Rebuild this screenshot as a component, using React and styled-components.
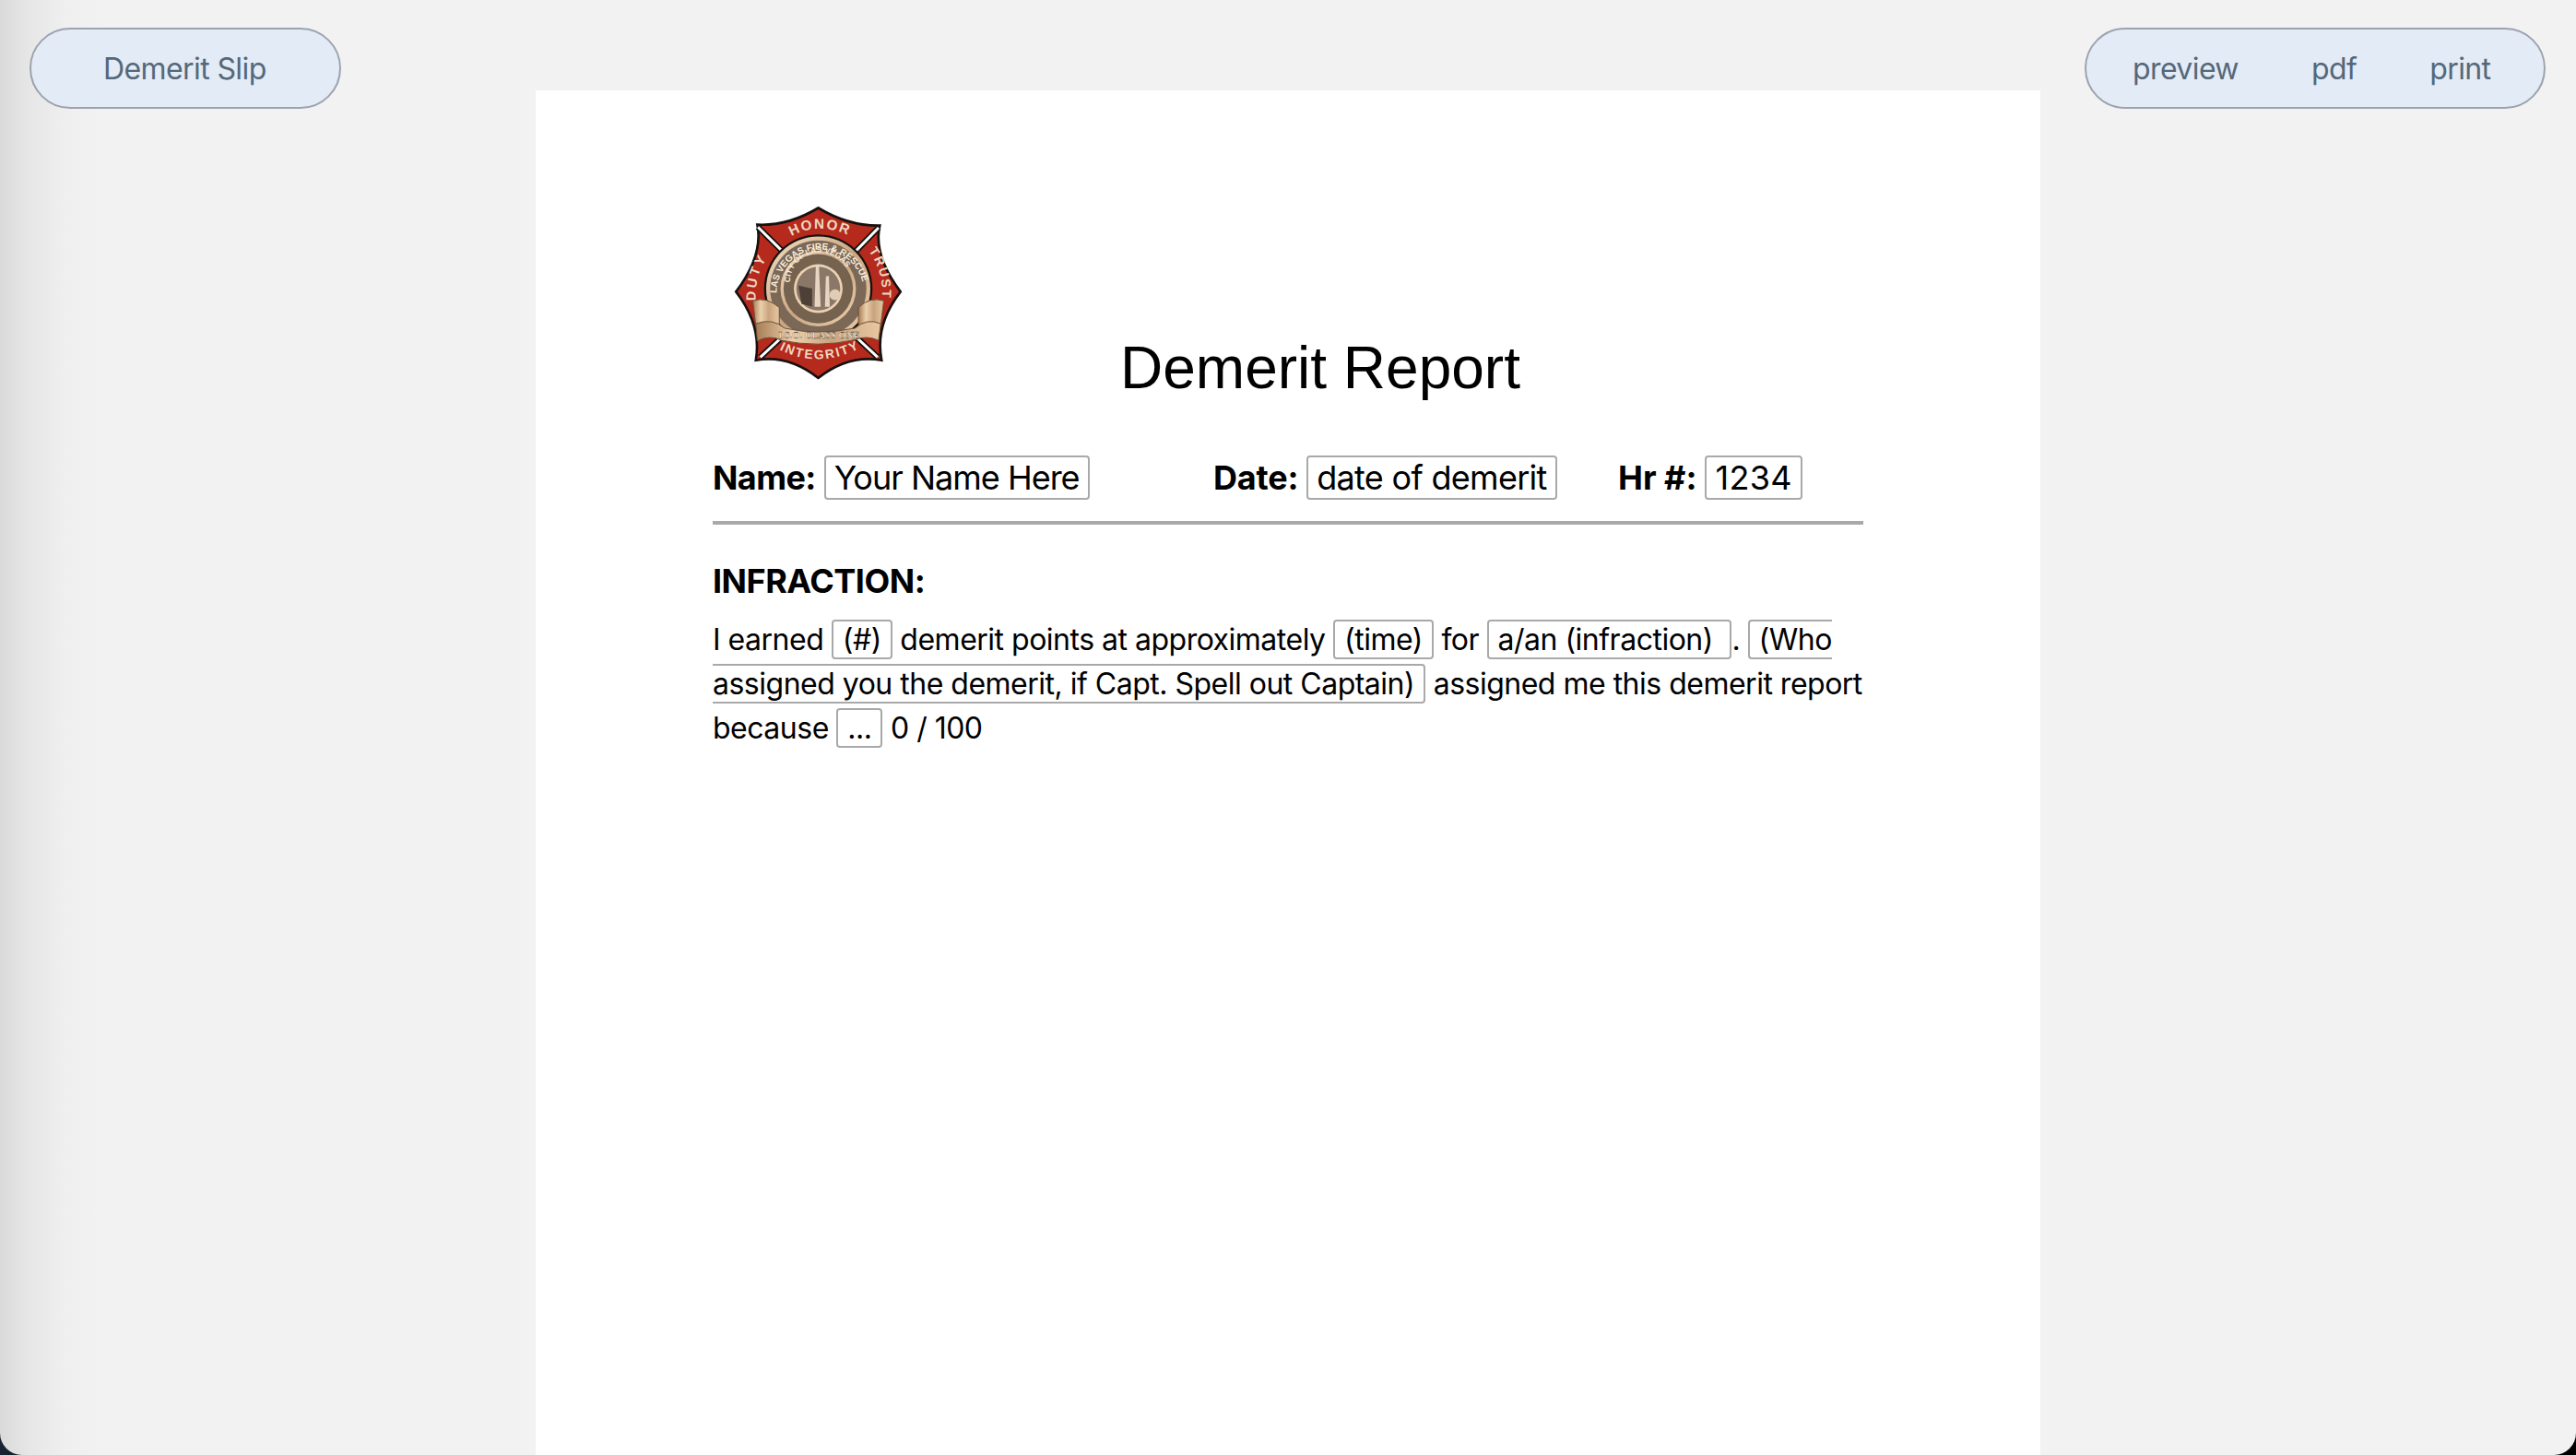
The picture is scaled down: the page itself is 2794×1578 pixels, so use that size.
import styled, { createGlobalStyle } from "styled-components";

const GlobalStyle = createGlobalStyle`
    html, body {
        margin: 0;
        padding: 0;
        background: linear-gradient(to right, #1a2433 0, #000 120px);
        overflow: hidden;
    }
`;

const Badge = () => (
    <S.Logo viewBox="70 35 560 580">
        <defs>
            <linearGradient id="metal" x1="0" y1="0" x2="1" y2="1">
                <stop offset="0" stopColor="#f5dfc4" />
                <stop offset="0.5" stopColor="#c9a682" />
                <stop offset="1" stopColor="#ecd0ae" />
            </linearGradient>
            <linearGradient id="ribbon" x1="0" y1="0" x2="1" y2="0">
                <stop offset="0" stopColor="#a67c55" />
                <stop offset="0.3" stopColor="#ecd0ac" />
                <stop offset="0.6" stopColor="#c9a47e" />
                <stop offset="1" stopColor="#e7c8a2" />
            </linearGradient>
            <path id="arcTop" d="M262 138 Q350 88 458 138" />
            <path id="arcLeft" d="M145 350 Q140 260 190 200" />
            <path id="arcRight" d="M515 185 Q570 260 558 360" />
            <path id="arcBottom" d="M222 510 Q350 575 488 505" />
            <path id="arcRing" d="M213 325 A138 138 0 1 1 500 325" />
            <path id="arcCity" d="M257 290 A98 98 0 0 1 455 290" />
        </defs>
        <path
            d="M150 100 Q250 105 350 45 Q450 105 552 103 Q530 200 620 320 Q535 430 558 545 Q450 525 350 603 Q250 525 145 545 Q165 430 80 320 Q170 200 150 100 Z"
            fill="#b62a1d"
            stroke="#17110f"
            strokeWidth="8"
        />
        <path d="M152 108 L235 190 M548 110 L470 190 M160 535 L235 465 M545 535 L470 465" stroke="#17110f" strokeWidth="20" />
        <path d="M152 108 L235 190 M548 110 L470 190 M160 535 L235 465 M545 535 L470 465" stroke="#fff" strokeWidth="9" />
        <circle cx="350" cy="310" r="178" fill="#17110f" />
        <circle cx="350" cy="310" r="171" fill="url(#metal)" />
        <circle cx="350" cy="310" r="158" fill="#7c6856" />
        <circle cx="350" cy="310" r="124" fill="url(#metal)" />
        <circle cx="350" cy="310" r="114" fill="#75624f" />
        <circle cx="350" cy="310" r="80" fill="#ecd2b2" />
        <circle cx="350" cy="310" r="72" fill="#8a7767" />
        <path d="M342 235 L352 230 L358 370 L338 370 Z M375 270 L385 268 L388 370 L372 370 Z" fill="#e6d5c1" />
        <path d="M285 300 L330 310 L330 370 L295 360 Z" fill="#4d4037" />
        <circle cx="405" cy="330" r="18" fill="#e0cdb6" />
        <text fontFamily="Liberation Sans, sans-serif" fontSize="46" fontWeight="700" fill="#ecd9c2" letterSpacing="5">
            <textPath href="#arcTop">HONOR</textPath>
        </text>
        <text fontFamily="Liberation Sans, sans-serif" fontSize="44" fontWeight="700" fill="#ecd9c2" letterSpacing="8">
            <textPath href="#arcLeft">DUTY</textPath>
        </text>
        <text fontFamily="Liberation Sans, sans-serif" fontSize="42" fontWeight="700" fill="#ecd9c2" letterSpacing="6">
            <textPath href="#arcRight">TRUST</textPath>
        </text>
        <text fontFamily="Liberation Sans, sans-serif" fontSize="42" fontWeight="700" fill="#ecd9c2" letterSpacing="6">
            <textPath href="#arcBottom">INTEGRITY</textPath>
        </text>
        <text fontFamily="Liberation Sans, sans-serif" fontSize="30" fontWeight="700" fill="#f8ecdc">
            <textPath href="#arcRing">LAS VEGAS FIRE &amp; RESCUE</textPath>
        </text>
        <text fontFamily="Liberation Sans, sans-serif" fontSize="26" fontWeight="700" fill="#f8ecdc">
            <textPath href="#arcCity">CITY OF LAS VEGAS</textPath>
        </text>
        <path d="M135 350 Q180 335 222 372 L222 440 Q180 410 145 430 Z" fill="url(#ribbon)" stroke="#6b5036" strokeWidth="3" />
        <path d="M565 350 Q520 335 482 372 L482 440 Q520 410 555 430 Z" fill="url(#ribbon)" stroke="#6b5036" strokeWidth="3" />
        <path d="M145 425 Q200 405 240 440 Q350 465 470 440 Q510 405 555 425 L548 480 Q510 462 470 478 Q350 505 230 480 Q190 460 150 482 Z" fill="url(#ribbon)" stroke="#6b5036" strokeWidth="3" />
        <text x="352" y="473" textAnchor="middle" fontFamily="Liberation Serif, serif" fontSize="32" fontWeight="700" fill="#fbf1e2" stroke="#5e4a38" strokeWidth="1">
            I.S.O. CLASS ONE
        </text>
    </S.Logo>
);

const App = () => {
    return (
        <S.Page>
            <GlobalStyle />
            <S.LeftSide>
                <S.Pill $pad="0 79px 0 78px">
                    <S.PillItem>Demerit Slip</S.PillItem>
                </S.Pill>
            </S.LeftSide>
            <S.Paper>
                <S.Header>
                    <Badge />
                    <S.Title>Demerit Report</S.Title>
                </S.Header>
                <S.InfoRow>
                    <S.Field $width="543px">
                        <S.FieldLabel $tracking="-0.6px">Name:</S.FieldLabel>
                        <S.FieldInput $tracking="-1px">Your Name Here</S.FieldInput>
                    </S.Field>
                    <S.Field $width="439px">
                        <S.FieldLabel $tracking="-0.2px">Date:</S.FieldLabel>
                        <S.FieldInput $tracking="-0.7px">date of demerit</S.FieldInput>
                    </S.Field>
                    <S.Field>
                        <S.FieldLabel $tracking="0">Hr #:</S.FieldLabel>
                        <S.FieldInput $tracking="0.3px">1234</S.FieldInput>
                    </S.Field>
                </S.InfoRow>
                <S.SectionTitle>INFRACTION:</S.SectionTitle>
                <S.Body>
                    I earned <S.Blank>(#)</S.Blank> demerit points at approximately <S.Blank>(time)</S.Blank> for{" "}
                    <S.Blank>a/an (infraction)&nbsp;</S.Blank>. <S.Blank>(Who assigned you the demerit, if Capt. Spell out Captain)</S.Blank>{" "}
                    assigned me this demerit report because <S.Blank>...</S.Blank> 0 / 100
                </S.Body>
            </S.Paper>
            <S.RightSide>
                <S.Pill $pad="0 58px 0 50px" $gap="79px">
                    <S.PillItem>preview</S.PillItem>
                    <S.PillItem>pdf</S.PillItem>
                    <S.PillItem>print</S.PillItem>
                </S.Pill>
            </S.RightSide>
        </S.Page>
    );
};

const S = {
    Page: styled.div`
        display: grid;
        grid-template-columns: 581px 1632px 1fr;
        height: 1578px;
        overflow: hidden;
        background: linear-gradient(to right, #dadada 0, #e6e6e6 30px, #efefef 70px, #f2f2f2 110px);
        border-radius: 0 0 24px 24px;
        font-family: "Inter", "Liberation Sans", sans-serif;
    `,
    LeftSide: styled.aside`
        padding: 30px 0 0 32px;
    `,
    RightSide: styled.aside`
        padding: 30px 0 0 48px;
    `,
    Pill: styled.nav`
        display: inline-flex;
        align-items: center;
        gap: ${(props) => props.$gap || "0"};
        box-sizing: border-box;
        height: 88px;
        padding: ${(props) => props.$pad};
        background: #e3ebf6;
        border: 2px solid #9ca3af;
        border-radius: 44px;
    `,
    PillItem: styled.span`
        font-size: 32px;
        letter-spacing: -0.6px;
        color: #55687a;
    `,
    Paper: styled.main`
        box-sizing: border-box;
        margin-top: 98px;
        padding: 124px 192px 0;
        background: #fff;
        color: #000;
    `,
    Header: styled.header`
        display: flex;
        align-items: flex-end;
        height: 192px;
        padding-left: 22px;
    `,
    Logo: styled.svg`
        flex: none;
        width: 185px;
        height: 192px;
    `,
    Title: styled.h1`
        margin: 0 0 -22px 235px;
        font-family: "Liberation Sans", sans-serif;
        font-size: 64px;
        font-weight: 400;
        line-height: 74px;
    `,
    InfoRow: styled.div`
        display: flex;
        align-items: center;
        height: 48px;
        margin-top: 80px;
        padding-bottom: 23px;
        border-bottom: 4px solid #a9a9a9;
    `,
    Field: styled.div`
        display: flex;
        align-items: center;
        flex: none;
        gap: 9px;
        width: ${(props) => props.$width || "auto"};
    `,
    FieldLabel: styled.span`
        font-size: 36px;
        font-weight: 700;
        letter-spacing: ${(props) => props.$tracking};
    `,
    FieldInput: styled.span`
        box-sizing: border-box;
        height: 48px;
        padding: 0 9px;
        font-size: 36px;
        letter-spacing: ${(props) => props.$tracking};
        line-height: 44px;
        border: 2px solid #a9a9a9;
        border-radius: 4px;
    `,
    SectionTitle: styled.h2`
        margin: 39px 0 0;
        font-size: 36px;
        font-weight: 700;
        letter-spacing: -0.5px;
        line-height: 44px;
    `,
    Body: styled.p`
        margin: 18px 0 0;
        font-size: 32px;
        letter-spacing: -0.5px;
        line-height: 48px;
    `,
    Blank: styled.span`
        padding: 0 10px;
        border: 2px solid #a9a9a9;
        border-radius: 4px;
    `,
};

export default App;
